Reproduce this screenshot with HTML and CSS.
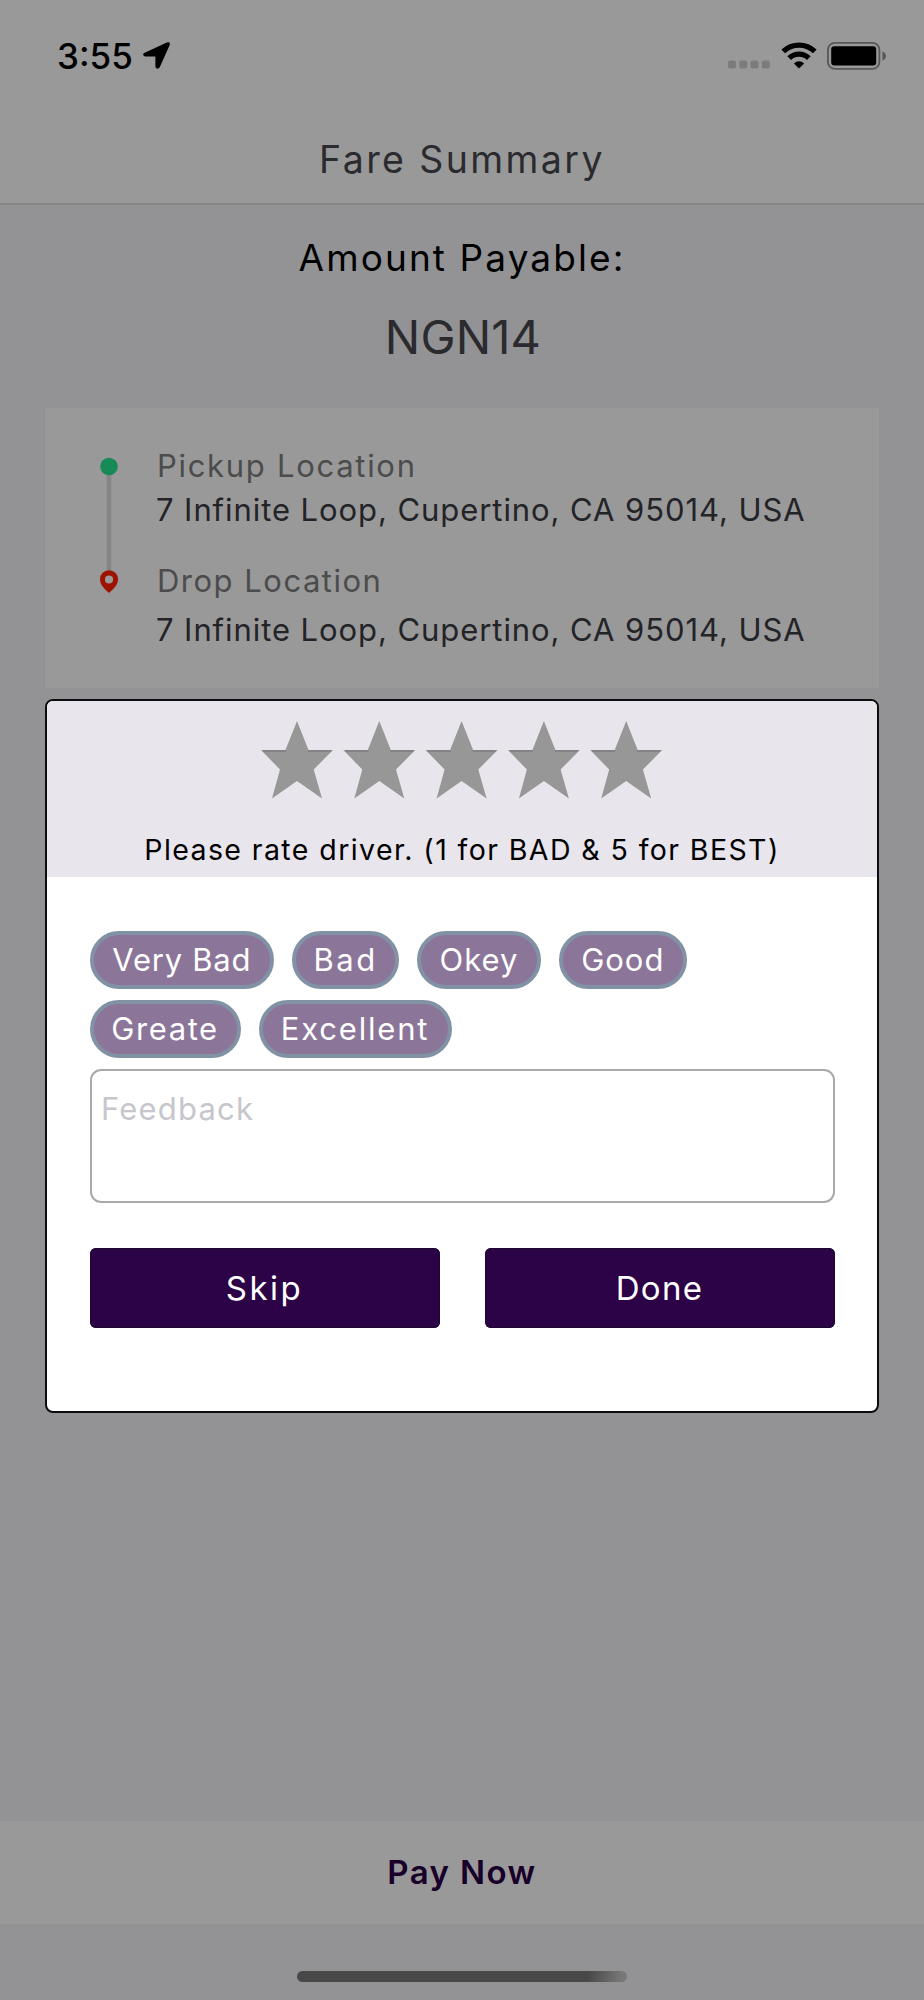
FILE: index.html
```
<!DOCTYPE html>
<html lang="en">
<head>
<meta charset="utf-8">
<meta name="viewport" content="width=device-width">
<title>Fare Summary</title>
<link rel="stylesheet" href="styles.css">
</head>
<body>
<div class="screen">
  <div class="status-bar">
    <div class="status-left">
      <span class="clock">3:55</span>
      <svg class="location-arrow" width="29" height="29" viewBox="0 0 29 29"><path d="M2.2 12 24.8 1.5Q28.8 .2 27.6 4.2L17.6 26.6Q15 29.2 13.4 26V15.4H3Q-.4 14 2.2 12Z"/></svg>
    </div>
    <div class="status-right">
      <svg width="42" height="28" viewBox="0 0 42 28" fill="#7c7c7c"><rect y="18.500" width="8" height="8" rx="2"/><rect x="11.3" y="18.500" width="8" height="8" rx="2"/><rect x="22.5" y="18.500" width="8" height="8" rx="2"/><rect x="33.8" y="18.500" width="8" height="8" rx="2"/></svg>
      <svg width="36" height="28" viewBox="0 0 36 28" fill="none" stroke="#000" stroke-width="5.2"><path d="M2.2 9.4A22.8 22.8 0 0 1 33.8 9.4"/><path d="M8.2 16.2A14 14 0 0 1 27.8 16.2"/><path d="M12.8 21.4Q18 17 23.2 21.4L18 26.600Z" fill="#000" stroke="none"/></svg>
      <svg width="60" height="28" viewBox="0 0 60 28"><rect x=".9" y=".9" width="51.5" height="26" rx="7" fill="none" stroke="#585858" stroke-width="1.8"/><rect x="4.2" y="4.2" width="45" height="19.2" rx="3.2"/><path d="M55.4 9.5Q59 11 59 14T55.4 18.8Z" fill="#585858"/></svg>
    </div>
  </div>
  <header class="title-bar">Fare Summary</header>
  <main class="content">
    <div class="amount-label">Amount Payable:</div>
    <div class="amount">NGN14</div>
    <section class="trip-card">
      <svg class="route" width="20" height="140" viewBox="0 0 20 140">
        <path d="M10 18V114" stroke="#858585" stroke-width="4.6"/>
        <circle cx="10" cy="9.5" r="8.8" fill="#178a58"/>
        <path fill="#9e1200" fill-rule="evenodd" d="M10 113.200a9 9 0 0 1 9 9c0 6-4.800 9.600-9 13.800-4.200-4.200-9-7.800-9-13.800a9 9 0 0 1 9-9Zm0 5.200a4.100 4.100 0 1 0 0 8.200 4.100 4.100 0 0 0 0-8.200Z"/>
      </svg>
      <div class="stops">
        <div class="stop-label pickup">Pickup Location</div>
        <div class="address">7 Infinite Loop, Cupertino, CA 95014, USA</div>
        <div class="stop-label drop">Drop Location</div>
        <div class="address">7 Infinite Loop, Cupertino, CA 95014, USA</div>
      </div>
    </section>
  </main>
  <footer class="pay-bar">Pay Now</footer>
  <div class="home-area"><div class="home-indicator"></div></div>

  <div class="modal">
    <div class="rating">
      <svg class="stars" width="402" height="78" viewBox="0 0 402 78">
        <defs><g id="star"><path fill="#979797" d="M36 0 47.500 29H72L52.700 48.500 61 77.500 36 60 11 77.500 19 48.500 0 29H24.500Z"/><path d="M2 30H25M47 30H70" fill="none" stroke="#7d7d7d" stroke-width="1.500"/></g></defs>
        <use href="#star"/><use href="#star" x="82.300"/><use href="#star" x="164.600"/><use href="#star" x="246.900"/><use href="#star" x="329.200"/>
      </svg>
      <div class="rating-hint">Please rate driver. (1 for BAD &amp; 5 for BEST)</div>
    </div>
    <div class="form">
      <div class="chips">
        <span class="chip very-bad">Very Bad</span>
        <span class="chip bad">Bad</span>
        <span class="chip okey">Okey</span>
        <span class="chip good">Good</span>
        <span class="chip greate">Greate</span>
        <span class="chip excellent">Excellent</span>
      </div>
      <div class="feedback">Feedback</div>
      <div class="actions">
        <div class="button skip">Skip</div>
        <div class="button done">Done</div>
      </div>
    </div>
  </div>
</div>
</body>
</html>
```
FILE: styles.css
```
* { box-sizing: border-box; }
body { margin: 0; font-family: Inter, "Liberation Sans", sans-serif; }
svg { display: block; flex: none; }

.screen {
  position: relative;
  display: flex;
  flex-direction: column;
  width: 924px;
  height: 2000px;
  background: #939395;
  overflow: hidden;
  white-space: nowrap;
}

/* Header */
.status-bar {
  display: flex;
  justify-content: space-between;
  align-items: center;
  height: 115px;
  padding: 0 37px 4px 57px;
  background: #999;
}
.status-left, .status-right { display: flex; align-items: center; }
.status-left { gap: 9px; }
.status-right { gap: 10.5px; }
.clock { font-size: 35px; font-weight: 550; line-height: 42px; }
.title-bar {
  height: 90px;
  border-bottom: 2px solid #858585;
  background: #999;
  color: #2b2b2f;
  font-size: 37.5px;
  line-height: 89px;
  letter-spacing: 2.4px;
  text-align: center;
}

/* Summary */
.content { flex: 1; padding: 31px 45px 0; }
.amount-label {
  font-size: 37px;
  line-height: 44px;
  letter-spacing: 2.1px;
  text-align: center;
}
.amount {
  margin: 28px 0 43px;
  padding-left: 2px;
  color: #2b2b2f;
  font-size: 47px;
  line-height: 57px;
  letter-spacing: .2px;
  text-align: center;
}
.trip-card {
  display: flex;
  gap: 37px;
  height: 280px;
  padding: 36px 0 0 54px;
  background: #999;
}
.route { margin-top: 13px; }
.stops { font-size: 31px; line-height: 44px; }
.stop-label { padding-left: 1px; color: #4c4c4c; }
.pickup { letter-spacing: 1.7px; }
.drop { margin-top: 27px; margin-bottom: 5px; letter-spacing: 1.5px; }
.address { color: #232328; letter-spacing: .93px; }

/* Footer */
.pay-bar {
  height: 103px;
  background: #999;
  color: #18002a;
  font-size: 33px;
  font-weight: 600;
  line-height: 103px;
  letter-spacing: 1.4px;
  text-align: center;
}
.home-area { display: flex; justify-content: center; height: 76px; padding-top: 47px; }
.home-indicator {
  width: 330px;
  height: 11px;
  border-radius: 6px;
  background: linear-gradient(100deg, #484848 88%, #777 98%);
}

/* Rating dialog */
.modal {
  position: absolute;
  top: 699px;
  left: 45px;
  width: 834px;
  height: 714px;
  border: 2px solid #0c0c0e;
  border-radius: 8px;
  background: #fff;
  overflow: hidden;
}
.rating {
  display: flex;
  flex-direction: column;
  align-items: center;
  gap: 32px;
  height: 176px;
  padding-top: 20px;
  background: #e8e5ec;
}
.rating-hint { font-size: 28.5px; line-height: 38px; letter-spacing: 1.41px; }
.form { padding: 54px 42.500px 0; }
.chips { display: flex; flex-wrap: wrap; gap: 11px 18px; }
.chip {
  height: 58px;
  border: 4px solid #8292a5;
  border-radius: 29px;
  background: #8b7599;
  color: #fff;
  font-size: 31px;
  line-height: 49px;
  text-align: center;
}
.very-bad { width: 184.600px; letter-spacing: .75px; }
.bad { width: 107.200px; letter-spacing: 2.600px; }
.okey { width: 123.500px; letter-spacing: 1px; }
.good { width: 128px; letter-spacing: 1px; }
.greate { width: 151px; letter-spacing: 1.600px; }
.excellent { width: 193px; letter-spacing: 1.800px; }
.feedback {
  height: 134px;
  margin-top: 11px;
  padding: 17px 9.500px;
  border: 2px solid #a9a9a9;
  border-radius: 11px;
  color: #c6c6cc;
  font-size: 31px;
  line-height: 42px;
  letter-spacing: 1.200px;
}
.actions { display: flex; gap: 45px; margin-top: 45px; }
.button {
  flex: 1;
  height: 80px;
  border-radius: 6px;
  background: #2b0346;
  box-shadow: inset 0 0 0 1px #1a0830;
  color: #fff;
  font-size: 33px;
  line-height: 80px;
  text-align: center;
}
.skip { letter-spacing: 2.500px; }
.done { letter-spacing: 1.300px; }
```
